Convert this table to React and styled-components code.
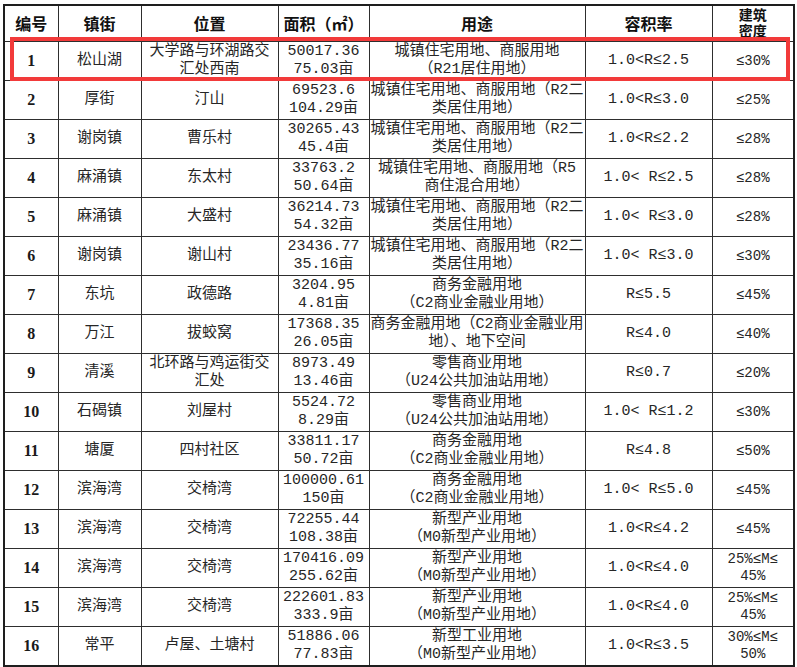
import React from "react";
import styled, {createGlobalStyle} from "styled-components";

const GlobalStyle = createGlobalStyle`
    body {
        margin: 0;
        background: #ffffff;
    }
`;

const Page = styled.div`
    padding: 4px 0 0 3px;
    width: 797px;
    height: 667px;
    box-sizing: border-box;
    overflow: hidden;
`;

const Frame = styled.div`
    position: relative;
    width: 790px;
`;

const Table = styled.table`
    width: 790px;
    border-collapse: collapse;
    table-layout: fixed;
    border: 2px solid #1e1e1e;
    color: #262626;
`;

const Col = styled.col`
    width: ${(p) => p.$w}px;
`;

const HeadCell = styled.th`
    height: 35px;
    padding: 0;
    border: 1px solid #2e2e2e;
    font-family: "Noto Sans CJK SC", "Noto Sans", sans-serif;
    font-size: ${(p) => (p.$stack ? 14 : 16)}px;
    font-weight: 700;
    line-height: ${(p) => (p.$stack ? 16 : 17)}px;
    color: #111;
    text-align: center;
    vertical-align: ${(p) => (p.$stack ? "top" : "middle")};
    white-space: nowrap;
    overflow: hidden;
`;

const Cell = styled.td`
    height: 38px;
    padding: 0;
    border: 1px solid #2e2e2e;
    font-family: "Liberation Mono", "Noto Sans CJK SC", monospace;
    font-size: 15px;
    line-height: 18px;
    text-align: center;
    vertical-align: middle;
    white-space: nowrap;
    overflow: hidden;
`;

const NumCell = styled(Cell)`
    font-family: "Liberation Serif", "Noto Sans CJK SC", serif;
    font-weight: 700;
    font-size: 16px;
    color: #1a1a1a;
`;

const SmallCell = styled(Cell)`
    font-size: 14px;
    line-height: 17px;
`;

const Line = styled.div`
    display: block;
`;

const Highlight = styled.div`
    position: absolute;
    left: 7px;
    top: 33px;
    width: 780px;
    height: 44px;
    box-sizing: border-box;
    border: 4px solid #f23a3a;
    pointer-events: none;
`;

const widths = [54, 83, 137, 91, 216, 127, 82];

const R2 = ["城镇住宅用地、商服用地（R2二", "类居住用地）"];
const C2 = ["商务金融用地", "（C2商业金融业用地）"];
const U24 = ["零售商业用地", "（U24公共加油站用地）"];
const M0 = ["新型产业用地", "（M0新型产业用地）"];

const rows = [
    ["1", "松山湖", ["大学路与环湖路交", "汇处西南"], ["50017.36", "75.03亩"], ["城镇住宅用地、商服用地", "（R21居住用地）"], "1.0<R≤2.5", ["≤30%"]],
    ["2", "厚街", ["汀山"], ["69523.6", "104.29亩"], R2, "1.0<R≤3.0", ["≤25%"]],
    ["3", "谢岗镇", ["曹乐村"], ["30265.43", "45.4亩"], R2, "1.0<R≤2.2", ["≤28%"]],
    ["4", "麻涌镇", ["东太村"], ["33763.2", "50.64亩"], ["城镇住宅用地、商服用地（R5", "商住混合用地）"], "1.0< R≤2.5", ["≤28%"]],
    ["5", "麻涌镇", ["大盛村"], ["36214.73", "54.32亩"], R2, "1.0< R≤3.0", ["≤28%"]],
    ["6", "谢岗镇", ["谢山村"], ["23436.77", "35.16亩"], R2, "1.0< R≤3.0", ["≤30%"]],
    ["7", "东坑", ["政德路"], ["3204.95", "4.81亩"], C2, "R≤5.5", ["≤45%"]],
    ["8", "万江", ["拔蛟窝"], ["17368.35", "26.05亩"], ["商务金融用地（C2商业金融业用", "地）、地下空间"], "R≤4.0", ["≤40%"]],
    ["9", "清溪", ["北环路与鸡运街交", "汇处"], ["8973.49", "13.46亩"], U24, "R≤0.7", ["≤20%"]],
    ["10", "石碣镇", ["刘屋村"], ["5524.72", "8.29亩"], U24, "1.0< R≤1.2", ["≤30%"]],
    ["11", "塘厦", ["四村社区"], ["33811.17", "50.72亩"], C2, "R≤4.8", ["≤50%"]],
    ["12", "滨海湾", ["交椅湾"], ["100000.61", "150亩"], C2, "1.0< R≤5.0", ["≤45%"]],
    ["13", "滨海湾", ["交椅湾"], ["72255.44", "108.38亩"], M0, "1.0<R≤4.2", ["≤45%"]],
    ["14", "滨海湾", ["交椅湾"], ["170416.09", "255.62亩"], M0, "1.0<R≤4.0", ["25%≤M≤", "45%"]],
    ["15", "滨海湾", ["交椅湾"], ["222601.83", "333.9亩"], M0, "1.0<R≤4.0", ["25%≤M≤", "45%"]],
    ["16", "常平", ["卢屋、土塘村"], ["51886.06", "77.83亩"], ["新型工业用地", "（M0新型产业用地）"], "1.0<R≤3.5", ["30%≤M≤", "50%"]],
];

function Lines({items}) {
    return items.map((t, i) => <Line key={i}>{t}</Line>);
}

export default function App() {
    return (
        <Page>
            <GlobalStyle/>
            <Frame>
                <Table>
                    <colgroup>
                        {widths.map((w, i) => <Col key={i} $w={w}/>)}
                    </colgroup>
                    <thead>
                    <tr>
                        <HeadCell>编号</HeadCell>
                        <HeadCell>镇街</HeadCell>
                        <HeadCell>位置</HeadCell>
                        <HeadCell>面积（㎡）</HeadCell>
                        <HeadCell>用途</HeadCell>
                        <HeadCell>容积率</HeadCell>
                        <HeadCell $stack>建筑<br/>密度</HeadCell>
                    </tr>
                    </thead>
                    <tbody>
                    {rows.map((r) => (
                        <tr key={r[0]}>
                            <NumCell>{r[0]}</NumCell>
                            <Cell>{r[1]}</Cell>
                            <Cell><Lines items={r[2]}/></Cell>
                            <Cell><Lines items={r[3]}/></Cell>
                            <Cell><Lines items={r[4]}/></Cell>
                            <Cell>{r[5]}</Cell>
                            <SmallCell><Lines items={r[6]}/></SmallCell>
                        </tr>
                    ))}
                    </tbody>
                </Table>
                <Highlight/>
            </Frame>
        </Page>
    );
}
